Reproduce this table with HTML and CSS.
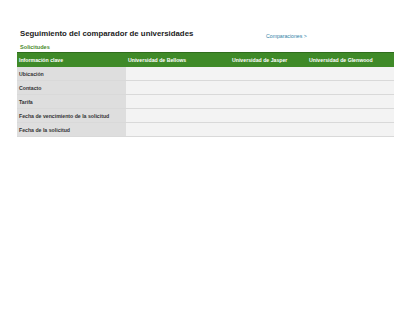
FILE: index.html
```html
<!DOCTYPE html>
<html lang="es">
<head>
<meta charset="utf-8">
<title>Seguimiento del comparador de universidades</title>
<link rel="stylesheet" href="styles.css">
</head>
<body>
<main class="page">
  <header class="top">
    <h1 class="title">Seguimiento del comparador de universidades</h1>
    <a class="link" href="#">Comparaciones &gt;</a>
  </header>
  <h2 class="section">Solicitudes</h2>
  <table class="grid">
    <colgroup>
      <col class="c1"><col class="c2"><col class="c3"><col class="c4">
    </colgroup>
    <thead>
      <tr>
        <th>Información clave</th>
        <th>Universidad de Bellows</th>
        <th>Universidad de Jasper</th>
        <th>Universidad de Glenwood</th>
      </tr>
    </thead>
    <tbody>
      <tr><th>Ubicación</th><td></td><td></td><td></td></tr>
      <tr><th>Contacto</th><td></td><td></td><td></td></tr>
      <tr><th>Tarifa</th><td></td><td></td><td></td></tr>
      <tr><th>Fecha de vencimiento de la solicitud</th><td></td><td></td><td></td></tr>
      <tr><th>Fecha de la solicitud</th><td></td><td></td><td></td></tr>
    </tbody>
  </table>
</main>
</body>
</html>
```
FILE: styles.css
```css
html, body {
  margin: 0;
  padding: 0;
  background: #ffffff;
}
body {
  font-family: "Liberation Sans", Arial, sans-serif;
  color: #262626;
}
.page {
  padding: 29px 0 0 17px;
  width: 377px;
}
.top {
  display: grid;
  grid-template-columns: 249px auto;
  align-items: end;
}
.title {
  margin: 0;
  padding-left: 3px;
  font-size: 7.8px;
  line-height: 10px;
  font-weight: bold;
  color: #222222;
  white-space: nowrap;
}
.link {
  font-size: 5.2px;
  line-height: 6px;
  color: #2f7fa6;
  text-decoration: none;
  margin-bottom: 0px;
}
.section {
  margin: 4px 0 0 0;
  padding-left: 3px;
  font-size: 5.6px;
  line-height: 8px;
  font-weight: bold;
  color: #4a8a2b;
}
.grid {
  margin-top: 1px;
  width: 377px;
  table-layout: fixed;
  border-collapse: collapse;
  border-spacing: 0;
}
.c1 { width: 109px; }
.c2 { width: 104px; }
.c3 { width: 77px; }
.c4 { width: 87px; }
.grid thead th {
  background: #3f8a28;
  border-top: 1px solid #2f6d1c;
  color: #ffffff;
  font-size: 5.2px;
  font-weight: bold;
  text-align: left;
  height: 14px;
  padding: 0 0 0 2px;
  white-space: nowrap;
}
.grid tbody th,
.grid tbody td {
  height: 13px;
  padding: 0 0 0 2px;
  border-bottom: 1px solid #d9d9d9;
}
.grid tbody th {
  background: #dedede;
  color: #333333;
  font-size: 5.2px;
  font-weight: bold;
  text-align: left;
  white-space: nowrap;
}
.grid tbody td {
  background: #f3f3f3;
}
```
